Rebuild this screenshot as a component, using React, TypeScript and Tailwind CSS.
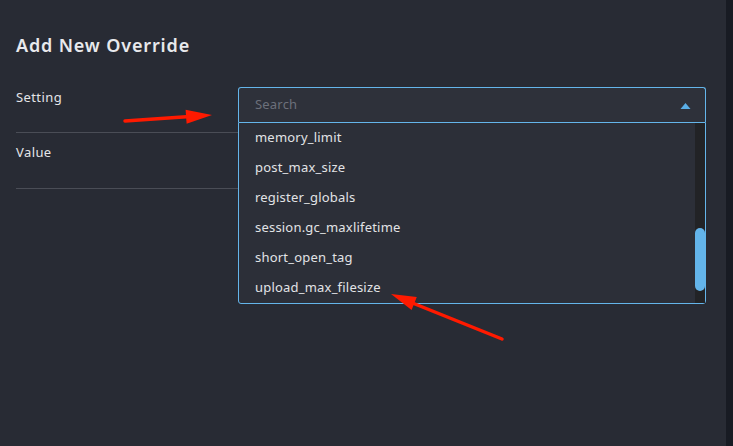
import React from "react";

const items = [
  "memory_limit",
  "post_max_size",
  "register_globals",
  "session.gc_maxlifetime",
  "short_open_tag",
  "upload_max_filesize",
];

export default function App() {
  return (
    <div
      className="relative flex h-[446px] w-[733px] overflow-hidden bg-[#282b34] text-[#e4e5e8]"
      style={{ fontFamily: '"Noto Sans", "Open Sans", sans-serif' }}
    >
      <div className="flex w-[726px] flex-col px-4 pt-[33px]">
        <h2 className="text-[18px] font-semibold leading-6 tracking-[0.85px] text-[#e8e9ec]">
          Add New Override
        </h2>
        <div className="mt-[20px] flex flex-col pr-[4px]">
          <div className="flex h-[56px] border-b border-[#4a4d56] pt-[10px]">
            <div className="w-[222px] shrink-0 text-[13px] leading-5 tracking-[0.4px]">Setting</div>
            <div className="relative flex-1">
              <div className="flex h-[35px] items-center justify-between rounded-t-[3px] border border-b-0 border-[#64b5ea] bg-[#2e313a] pl-4 pr-[14px]">
                <span className="text-[13px] tracking-[0.2px] text-[#6c707a]">Search</span>
                <svg width="11" height="7" viewBox="0 0 11 7">
                  <path d="M0.5 7 L5.5 1 L10.5 7 Z" fill="#5aaee6" />
                </svg>
              </div>
              <div className="absolute left-0 right-0 top-[35px] z-10 flex h-[182px] rounded-b-[3px] border border-[#64b5ea] bg-[#2c2f38]">
                <div className="flex flex-1 flex-col">
                  {items.map((it) => (
                    <div
                      key={it}
                      className="flex h-[30px] items-center pl-4 text-[13px] tracking-[0.2px] text-[#e2e3e6]"
                    >
                      {it}
                    </div>
                  ))}
                </div>
                <div className="flex w-[10px] flex-col bg-[#222326] pt-[105px] pb-[10px]">
                  <div className="h-[63px] w-[10px] rounded-full bg-[#63b4ea]" />
                </div>
              </div>
            </div>
          </div>
          <div className="flex h-[56px] border-b border-[#4a4d56] pt-[9px]">
            <div className="w-[222px] shrink-0 text-[13px] leading-5 tracking-[0.4px]">Value</div>
          </div>
        </div>
      </div>
      <div className="w-[7px] bg-[#181b23]" />
      <svg
        className="pointer-events-none absolute inset-0 z-20"
        width="733"
        height="446"
        viewBox="0 0 733 446"
      >
        <line x1="125" y1="121" x2="190" y2="116.5" stroke="#ff1a00" strokeWidth="3.5" strokeLinecap="round" />
        <polygon points="212,115 186.6,123.8 185.6,109.8" fill="#ff1a00" />
        <line x1="502" y1="339" x2="410" y2="302" stroke="#ff1a00" strokeWidth="3.5" strokeLinecap="round" />
        <polygon points="391,294 416.8,296.9 411.6,309.9" fill="#ff1a00" />
      </svg>
    </div>
  );
}
